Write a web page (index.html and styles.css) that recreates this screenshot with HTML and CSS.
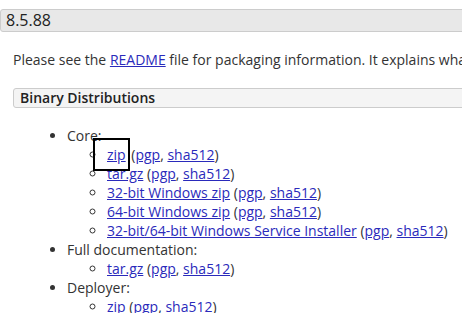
FILE: index.html
```html
<!DOCTYPE html>
<html lang="en">
<head>
    <meta charset="UTF-8">
    <title>Tomcat 8.5.88</title>
    <link rel="stylesheet" href="styles.css">
</head>
<body>
    <!-- Release block -->
    <div class="release">
        <h3 class="version">8.5.88</h3>
        <div class="release-body">
            <p class="intro">Please see the <a href="#">README</a> file for packaging information. It explains what every distribution contains.</p>

            <h4 class="dist-title">Binary Distributions</h4>
            <ul class="dist-list">
                <li>Core:
                    <ul>
                        <li><a href="#" class="focused">zip</a> (<a href="#">pgp</a>, <a href="#">sha512</a>)</li>
                        <li><a href="#">tar.gz</a> (<a href="#">pgp</a>, <a href="#">sha512</a>)</li>
                        <li><a href="#">32-bit Windows zip</a> (<a href="#">pgp</a>, <a href="#">sha512</a>)</li>
                        <li><a href="#">64-bit Windows zip</a> (<a href="#">pgp</a>, <a href="#">sha512</a>)</li>
                        <li><a href="#">32-bit/64-bit Windows Service Installer</a> (<a href="#">pgp</a>, <a href="#">sha512</a>)</li>
                    </ul>
                </li>
                <li>Full documentation:
                    <ul>
                        <li><a href="#">tar.gz</a> (<a href="#">pgp</a>, <a href="#">sha512</a>)</li>
                    </ul>
                </li>
                <li>Deployer:
                    <ul>
                        <li><a href="#">zip</a> (<a href="#">pgp</a>, <a href="#">sha512</a>)</li>
                    </ul>
                </li>
            </ul>
        </div>
    </div>
</body>
</html>
```

FILE: styles.css
```css
body {
    font-family: "Open Sans", sans-serif;
    font-size: 14px;
    color: #333;
    background-color: #fff;
    margin: 0;
    overflow: hidden;
}

a {
    color: #2a2abb;
}

.release {
    width: 520px;
    padding-top: 9px;
}

.version {
    margin: 0;
    height: 21px;
    line-height: 21px;
    padding-left: 5px;
    font-size: 16px;
    font-weight: normal;
    color: #222;
    background-color: #e8e8e8;
    border: 1px solid #ccc;
    border-radius: 3px;
}

.release-body {
    padding-left: 13px;
}

.intro {
    margin: 18px 0 0 0;
    line-height: 20px;
    white-space: nowrap;
}

.dist-title {
    margin: 18px 0 0 0;
    height: 18px;
    line-height: 18px;
    padding-left: 6px;
    font-size: 14px;
    font-weight: 600;
    color: #222;
    background-color: #f4f4f4;
    border: 1px solid #ccc;
    border-radius: 3px;
}

.dist-list {
    margin: 18px 0 0 0;
    padding-left: 54px;
    line-height: 19px;
}

.dist-list ul {
    margin: 0;
    padding-left: 40px;
    list-style-type: circle;
}

.dist-list li {
    white-space: nowrap;
}

.focused {
    outline: 2px solid #000;
    outline-offset: 0;
    padding: 5px 2px 5px 12px;
    margin-left: -12px;
}
```
